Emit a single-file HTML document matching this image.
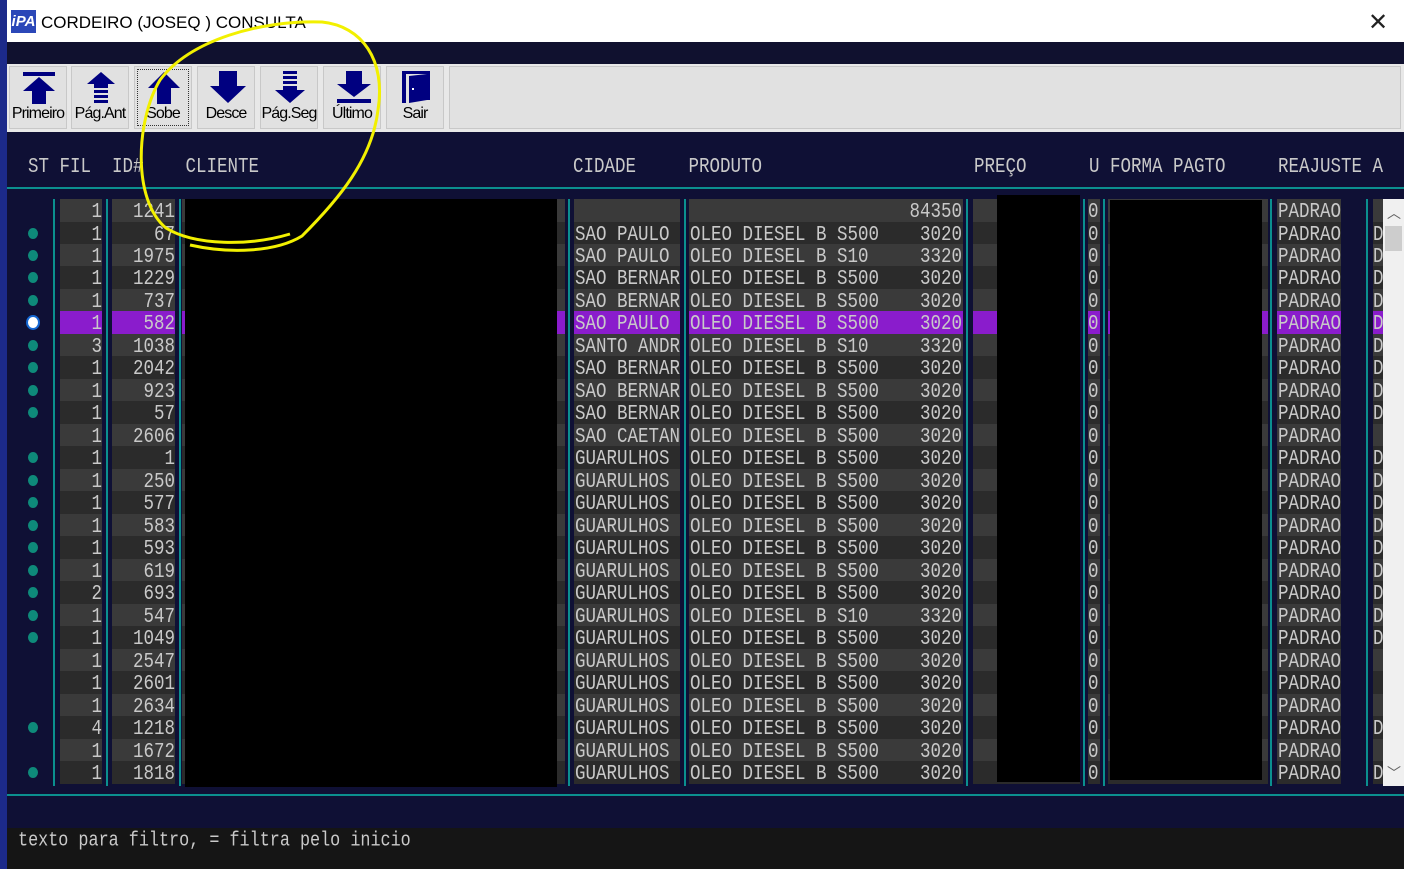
<!DOCTYPE html>
<html><head><meta charset="utf-8"><style>
*{margin:0;padding:0;box-sizing:border-box}
body{width:1404px;height:869px;overflow:hidden;background:#0f1035;position:relative;font-family:"Liberation Mono",monospace}
.a{position:absolute}
.t{position:absolute;color:#c9c9c9;font-size:17.5px;line-height:22px;white-space:pre;transform:scaleY(1.22);transform-origin:0 50%}
.btn{position:absolute;top:66px;width:58px;height:63px;background:#e1e1e1;border:1px solid #c8c8c8;font-family:"Liberation Sans",sans-serif;font-size:16px;color:#000;text-align:center;letter-spacing:-0.9px}
.btn svg{position:absolute;left:12px;top:3px}
.btn span{position:absolute;left:-2px;right:-2px;top:38px}
.row{position:absolute;left:0;width:1404px;height:23px}
.c{position:absolute;top:0;height:23px;background:#3a3a3a;color:#c9c9c9;font-size:17.5px;line-height:23px;white-space:pre;overflow:hidden}
.o .c{background:#2b2b2b}
.s .c{background:#8a1ccc}
.c span{display:inline-block;transform:translateY(2px) scaleY(1.22)}
.f{left:60px;width:42px;text-align:right}
.i{left:112px;width:63px;text-align:right}
.k{left:182px;width:383px}
.d{left:574px;width:106px;padding-left:1px}
.p{left:689px;width:274px;padding-left:1px}
.pr{position:absolute;right:1px;top:0}
.q{left:973px;width:107px}
.u{left:1088px;width:12px}
.w{left:1108px;width:160px}
.j{left:1277px;width:64px;padding-left:1px}
.z{left:1373px;width:10px}
.sep{position:absolute;width:2px;background:#0b8f8f;top:199px;height:587px}
.sm{position:absolute;left:28px;top:6px;width:10px;height:11px;border-radius:50%;background:#0e8a7a}
.sel{background:#fff;box-shadow:0 0 0 2px #1567d3}
</style></head><body>
<div class="a" style="left:0;top:0;width:7px;height:869px;background:#1c2a8a"></div>
<div class="a" style="left:7px;top:0;width:1397px;height:42px;background:#fff"></div>
<div class="a" style="left:11px;top:10px;width:25px;height:23px;background:#2b47b8;color:#fff;font:bold italic 15px 'Liberation Sans',sans-serif;line-height:23px;text-align:center">iPA</div>
<div class="a" style="left:41px;top:13px;font:17px 'Liberation Sans',sans-serif;color:#000">CORDEIRO (JOSEQ ) CONSULTA</div>
<div class="a" style="left:1368px;top:8px;font:24px 'Liberation Sans',sans-serif;color:#222">✕</div>
<div class="a" style="left:7px;top:42px;width:1397px;height:22px;background:#10112f"></div>
<div class="a" style="left:7px;top:64px;width:1397px;height:68px;background:#e8e8e8"></div>
<div class="btn" style="left:9px"><svg width="34" height="34" viewBox="0 0 34 34"><rect x="1" y="2" width="32" height="4" fill="#000080"/><path d="M17 7 L33 21 L24 21 L24 34 L10 34 L10 21 L1 21Z" fill="#000080"/></svg><span>Primeiro</span></div>
<div class="btn" style="left:71px"><svg width="34" height="34" viewBox="0 0 34 34"><path d="M17 2 L31 14 L3 14Z" fill="#000080"/><rect x="10" y="14" width="14" height="4" fill="#000080"/><rect x="10" y="20" width="14" height="3" fill="#000080"/><rect x="10" y="25" width="14" height="3" fill="#000080"/><rect x="10" y="30" width="14" height="3" fill="#000080"/></svg><span>Pág.Ant</span></div>
<div class="btn" style="left:134px;outline:1px dotted #333;outline-offset:-4px"><svg width="34" height="34" viewBox="0 0 34 34"><path d="M17 2 L33 18 L24 18 L24 34 L10 34 L10 18 L1 18Z" fill="#000080"/></svg><span>Sobe</span></div>
<div class="btn" style="left:197px"><svg width="36" height="34" viewBox="0 0 36 34"><path d="M9 1 L27 1 L27 16 L36 16 L18 33 L0 16 L9 16Z" fill="#000080"/></svg><span>Desce</span></div>
<div class="btn" style="left:260px"><svg width="34" height="34" viewBox="0 0 34 34"><rect x="10" y="1" width="14" height="3" fill="#000080"/><rect x="10" y="6" width="14" height="3" fill="#000080"/><rect x="10" y="11" width="14" height="3" fill="#000080"/><path d="M10 16 L24 16 L24 20 L32 20 L17 33 L2 20 L10 20Z" fill="#000080"/></svg><span>Pág.Seg</span></div>
<div class="btn" style="left:323px"><svg width="36" height="34" viewBox="0 0 36 34"><path d="M10 1 L26 1 L26 14 L35 14 L18 27 L1 14 L10 14Z" fill="#000080"/><rect x="1" y="29" width="34" height="4" fill="#000080"/></svg><span>Último</span></div>
<div class="btn" style="left:386px"><svg width="34" height="34" viewBox="0 0 34 34"><path d="M3 1 L31 1 L31 30 L28 30 L28 4 L7 4 L7 33 L3 33Z" fill="#000080"/><path d="M10 6 L28 4 L28 30 L10 33Z" fill="#000080"/><rect x="13" y="18" width="2" height="2" fill="#fff"/></svg><span>Sair</span></div>
<div class="a" style="left:449px;top:66px;width:952px;height:63px;background:#e1e1e1;border:1px solid #c8c8c8"></div>

<div class="t" style="left:28px;top:156px">ST FIL  ID#    CLIENTE</div>
<div class="t" style="left:573px;top:156px">CIDADE     PRODUTO</div>
<div class="t" style="left:974px;top:156px">PREÇO</div>
<div class="t" style="left:1089px;top:156px">U FORMA PAGTO</div>
<div class="t" style="left:1278px;top:156px">REAJUSTE A</div>
<div class="a" style="left:7px;top:187px;width:1397px;height:2px;background:#0b8f8f"></div>

<div class="sep" style="left:53px"></div>
<div class="sep" style="left:106px"></div>
<div class="sep" style="left:179px"></div>
<div class="sep" style="left:568px"></div>
<div class="sep" style="left:684px"></div>
<div class="sep" style="left:966px"></div>
<div class="sep" style="left:1083px"></div>
<div class="sep" style="left:1103px"></div>
<div class="sep" style="left:1270px"></div>
<div class="sep" style="left:1366px"></div>

<div class="row" style="top:199px"><div class="c f"><span>1</span></div><div class="c i"><span>1241</span></div><div class="c k"></div><div class="c d"></div><div class="c p"><span class="pr">84350</span></div><div class="c q"></div><div class="c u"><span>0</span></div><div class="c w"></div><div class="c j"><span>PADRAO</span></div><div class="c z"></div></div>
<div class="row o" style="top:222px"><i class="sm"></i><div class="c f"><span>1</span></div><div class="c i"><span>67</span></div><div class="c k"></div><div class="c d"><span>SAO PAULO</span></div><div class="c p"><span>OLEO DIESEL B S500</span><span class="pr">3020</span></div><div class="c q"></div><div class="c u"><span>0</span></div><div class="c w"></div><div class="c j"><span>PADRAO</span></div><div class="c z"><span>D</span></div></div>
<div class="row" style="top:244px"><i class="sm"></i><div class="c f"><span>1</span></div><div class="c i"><span>1975</span></div><div class="c k"></div><div class="c d"><span>SAO PAULO</span></div><div class="c p"><span>OLEO DIESEL B S10</span><span class="pr">3320</span></div><div class="c q"></div><div class="c u"><span>0</span></div><div class="c w"></div><div class="c j"><span>PADRAO</span></div><div class="c z"><span>D</span></div></div>
<div class="row o" style="top:266px"><i class="sm"></i><div class="c f"><span>1</span></div><div class="c i"><span>1229</span></div><div class="c k"></div><div class="c d"><span>SAO BERNAR</span></div><div class="c p"><span>OLEO DIESEL B S500</span><span class="pr">3020</span></div><div class="c q"></div><div class="c u"><span>0</span></div><div class="c w"></div><div class="c j"><span>PADRAO</span></div><div class="c z"><span>D</span></div></div>
<div class="row" style="top:289px"><i class="sm"></i><div class="c f"><span>1</span></div><div class="c i"><span>737</span></div><div class="c k"></div><div class="c d"><span>SAO BERNAR</span></div><div class="c p"><span>OLEO DIESEL B S500</span><span class="pr">3020</span></div><div class="c q"></div><div class="c u"><span>0</span></div><div class="c w"></div><div class="c j"><span>PADRAO</span></div><div class="c z"><span>D</span></div></div>
<div class="row s" style="top:311px"><i class="sm sel"></i><div class="c f"><span>1</span></div><div class="c i"><span>582</span></div><div class="c k"></div><div class="c d"><span>SAO PAULO</span></div><div class="c p"><span>OLEO DIESEL B S500</span><span class="pr">3020</span></div><div class="c q"></div><div class="c u"><span>0</span></div><div class="c w"></div><div class="c j"><span>PADRAO</span></div><div class="c z"><span>D</span></div></div>
<div class="row" style="top:334px"><i class="sm"></i><div class="c f"><span>3</span></div><div class="c i"><span>1038</span></div><div class="c k"></div><div class="c d"><span>SANTO ANDR</span></div><div class="c p"><span>OLEO DIESEL B S10</span><span class="pr">3320</span></div><div class="c q"></div><div class="c u"><span>0</span></div><div class="c w"></div><div class="c j"><span>PADRAO</span></div><div class="c z"><span>D</span></div></div>
<div class="row o" style="top:356px"><i class="sm"></i><div class="c f"><span>1</span></div><div class="c i"><span>2042</span></div><div class="c k"></div><div class="c d"><span>SAO BERNAR</span></div><div class="c p"><span>OLEO DIESEL B S500</span><span class="pr">3020</span></div><div class="c q"></div><div class="c u"><span>0</span></div><div class="c w"></div><div class="c j"><span>PADRAO</span></div><div class="c z"><span>D</span></div></div>
<div class="row" style="top:379px"><i class="sm"></i><div class="c f"><span>1</span></div><div class="c i"><span>923</span></div><div class="c k"></div><div class="c d"><span>SAO BERNAR</span></div><div class="c p"><span>OLEO DIESEL B S500</span><span class="pr">3020</span></div><div class="c q"></div><div class="c u"><span>0</span></div><div class="c w"></div><div class="c j"><span>PADRAO</span></div><div class="c z"><span>D</span></div></div>
<div class="row o" style="top:401px"><i class="sm"></i><div class="c f"><span>1</span></div><div class="c i"><span>57</span></div><div class="c k"></div><div class="c d"><span>SAO BERNAR</span></div><div class="c p"><span>OLEO DIESEL B S500</span><span class="pr">3020</span></div><div class="c q"></div><div class="c u"><span>0</span></div><div class="c w"></div><div class="c j"><span>PADRAO</span></div><div class="c z"><span>D</span></div></div>
<div class="row" style="top:424px"><div class="c f"><span>1</span></div><div class="c i"><span>2606</span></div><div class="c k"></div><div class="c d"><span>SAO CAETAN</span></div><div class="c p"><span>OLEO DIESEL B S500</span><span class="pr">3020</span></div><div class="c q"></div><div class="c u"><span>0</span></div><div class="c w"></div><div class="c j"><span>PADRAO</span></div><div class="c z"></div></div>
<div class="row o" style="top:446px"><i class="sm"></i><div class="c f"><span>1</span></div><div class="c i"><span>1</span></div><div class="c k"></div><div class="c d"><span>GUARULHOS</span></div><div class="c p"><span>OLEO DIESEL B S500</span><span class="pr">3020</span></div><div class="c q"></div><div class="c u"><span>0</span></div><div class="c w"></div><div class="c j"><span>PADRAO</span></div><div class="c z"><span>D</span></div></div>
<div class="row" style="top:469px"><i class="sm"></i><div class="c f"><span>1</span></div><div class="c i"><span>250</span></div><div class="c k"></div><div class="c d"><span>GUARULHOS</span></div><div class="c p"><span>OLEO DIESEL B S500</span><span class="pr">3020</span></div><div class="c q"></div><div class="c u"><span>0</span></div><div class="c w"></div><div class="c j"><span>PADRAO</span></div><div class="c z"><span>D</span></div></div>
<div class="row o" style="top:491px"><i class="sm"></i><div class="c f"><span>1</span></div><div class="c i"><span>577</span></div><div class="c k"></div><div class="c d"><span>GUARULHOS</span></div><div class="c p"><span>OLEO DIESEL B S500</span><span class="pr">3020</span></div><div class="c q"></div><div class="c u"><span>0</span></div><div class="c w"></div><div class="c j"><span>PADRAO</span></div><div class="c z"><span>D</span></div></div>
<div class="row" style="top:514px"><i class="sm"></i><div class="c f"><span>1</span></div><div class="c i"><span>583</span></div><div class="c k"></div><div class="c d"><span>GUARULHOS</span></div><div class="c p"><span>OLEO DIESEL B S500</span><span class="pr">3020</span></div><div class="c q"></div><div class="c u"><span>0</span></div><div class="c w"></div><div class="c j"><span>PADRAO</span></div><div class="c z"><span>D</span></div></div>
<div class="row o" style="top:536px"><i class="sm"></i><div class="c f"><span>1</span></div><div class="c i"><span>593</span></div><div class="c k"></div><div class="c d"><span>GUARULHOS</span></div><div class="c p"><span>OLEO DIESEL B S500</span><span class="pr">3020</span></div><div class="c q"></div><div class="c u"><span>0</span></div><div class="c w"></div><div class="c j"><span>PADRAO</span></div><div class="c z"><span>D</span></div></div>
<div class="row" style="top:559px"><i class="sm"></i><div class="c f"><span>1</span></div><div class="c i"><span>619</span></div><div class="c k"></div><div class="c d"><span>GUARULHOS</span></div><div class="c p"><span>OLEO DIESEL B S500</span><span class="pr">3020</span></div><div class="c q"></div><div class="c u"><span>0</span></div><div class="c w"></div><div class="c j"><span>PADRAO</span></div><div class="c z"><span>D</span></div></div>
<div class="row o" style="top:581px"><i class="sm"></i><div class="c f"><span>2</span></div><div class="c i"><span>693</span></div><div class="c k"></div><div class="c d"><span>GUARULHOS</span></div><div class="c p"><span>OLEO DIESEL B S500</span><span class="pr">3020</span></div><div class="c q"></div><div class="c u"><span>0</span></div><div class="c w"></div><div class="c j"><span>PADRAO</span></div><div class="c z"><span>D</span></div></div>
<div class="row" style="top:604px"><i class="sm"></i><div class="c f"><span>1</span></div><div class="c i"><span>547</span></div><div class="c k"></div><div class="c d"><span>GUARULHOS</span></div><div class="c p"><span>OLEO DIESEL B S10</span><span class="pr">3320</span></div><div class="c q"></div><div class="c u"><span>0</span></div><div class="c w"></div><div class="c j"><span>PADRAO</span></div><div class="c z"><span>D</span></div></div>
<div class="row o" style="top:626px"><i class="sm"></i><div class="c f"><span>1</span></div><div class="c i"><span>1049</span></div><div class="c k"></div><div class="c d"><span>GUARULHOS</span></div><div class="c p"><span>OLEO DIESEL B S500</span><span class="pr">3020</span></div><div class="c q"></div><div class="c u"><span>0</span></div><div class="c w"></div><div class="c j"><span>PADRAO</span></div><div class="c z"><span>D</span></div></div>
<div class="row" style="top:649px"><div class="c f"><span>1</span></div><div class="c i"><span>2547</span></div><div class="c k"></div><div class="c d"><span>GUARULHOS</span></div><div class="c p"><span>OLEO DIESEL B S500</span><span class="pr">3020</span></div><div class="c q"></div><div class="c u"><span>0</span></div><div class="c w"></div><div class="c j"><span>PADRAO</span></div><div class="c z"></div></div>
<div class="row o" style="top:671px"><div class="c f"><span>1</span></div><div class="c i"><span>2601</span></div><div class="c k"></div><div class="c d"><span>GUARULHOS</span></div><div class="c p"><span>OLEO DIESEL B S500</span><span class="pr">3020</span></div><div class="c q"></div><div class="c u"><span>0</span></div><div class="c w"></div><div class="c j"><span>PADRAO</span></div><div class="c z"></div></div>
<div class="row" style="top:694px"><div class="c f"><span>1</span></div><div class="c i"><span>2634</span></div><div class="c k"></div><div class="c d"><span>GUARULHOS</span></div><div class="c p"><span>OLEO DIESEL B S500</span><span class="pr">3020</span></div><div class="c q"></div><div class="c u"><span>0</span></div><div class="c w"></div><div class="c j"><span>PADRAO</span></div><div class="c z"></div></div>
<div class="row o" style="top:716px"><i class="sm"></i><div class="c f"><span>4</span></div><div class="c i"><span>1218</span></div><div class="c k"></div><div class="c d"><span>GUARULHOS</span></div><div class="c p"><span>OLEO DIESEL B S500</span><span class="pr">3020</span></div><div class="c q"></div><div class="c u"><span>0</span></div><div class="c w"></div><div class="c j"><span>PADRAO</span></div><div class="c z"><span>D</span></div></div>
<div class="row" style="top:739px"><div class="c f"><span>1</span></div><div class="c i"><span>1672</span></div><div class="c k"></div><div class="c d"><span>GUARULHOS</span></div><div class="c p"><span>OLEO DIESEL B S500</span><span class="pr">3020</span></div><div class="c q"></div><div class="c u"><span>0</span></div><div class="c w"></div><div class="c j"><span>PADRAO</span></div><div class="c z"></div></div>
<div class="row o" style="top:761px"><i class="sm"></i><div class="c f"><span>1</span></div><div class="c i"><span>1818</span></div><div class="c k"></div><div class="c d"><span>GUARULHOS</span></div><div class="c p"><span>OLEO DIESEL B S500</span><span class="pr">3020</span></div><div class="c q"></div><div class="c u"><span>0</span></div><div class="c w"></div><div class="c j"><span>PADRAO</span></div><div class="c z"><span>D</span></div></div>

<div class="a" style="left:185px;top:199px;width:372px;height:588px;background:#000"></div>
<div class="a" style="left:997px;top:195px;width:83px;height:587px;background:#000"></div>
<div class="a" style="left:1110px;top:200px;width:152px;height:580px;background:#000"></div>

<div class="a" style="left:1383px;top:199px;width:21px;height:587px;background:#f0f0f0"></div>
<div class="a" style="left:1385px;top:226px;width:17px;height:25px;background:#cdcdcd"></div>
<div class="a" style="left:1387px;top:203px;font:14px 'Liberation Sans',sans-serif;color:#606060">︿</div>
<div class="a" style="left:1387px;top:763px;font:14px 'Liberation Sans',sans-serif;color:#606060">﹀</div>

<div class="a" style="left:7px;top:794px;width:1397px;height:2px;background:#0b8f8f"></div>
<div class="a" style="left:7px;top:828px;width:1397px;height:41px;background:#151515"></div>
<div class="t" style="left:18px;top:831px;font-size:16.8px">texto para filtro, = filtra pelo inicio</div>

<svg class="a" style="left:0;top:0" width="1404" height="869"><path d="M290 234 C250 246 195 246 166 228 C132 200 136 120 160 80 C190 40 260 20 322 22 C362 26 386 60 378 110 C372 160 338 200 302 236 C276 252 230 254 190 245" fill="none" stroke="#f2f000" stroke-width="3"/></svg>
</body></html>
